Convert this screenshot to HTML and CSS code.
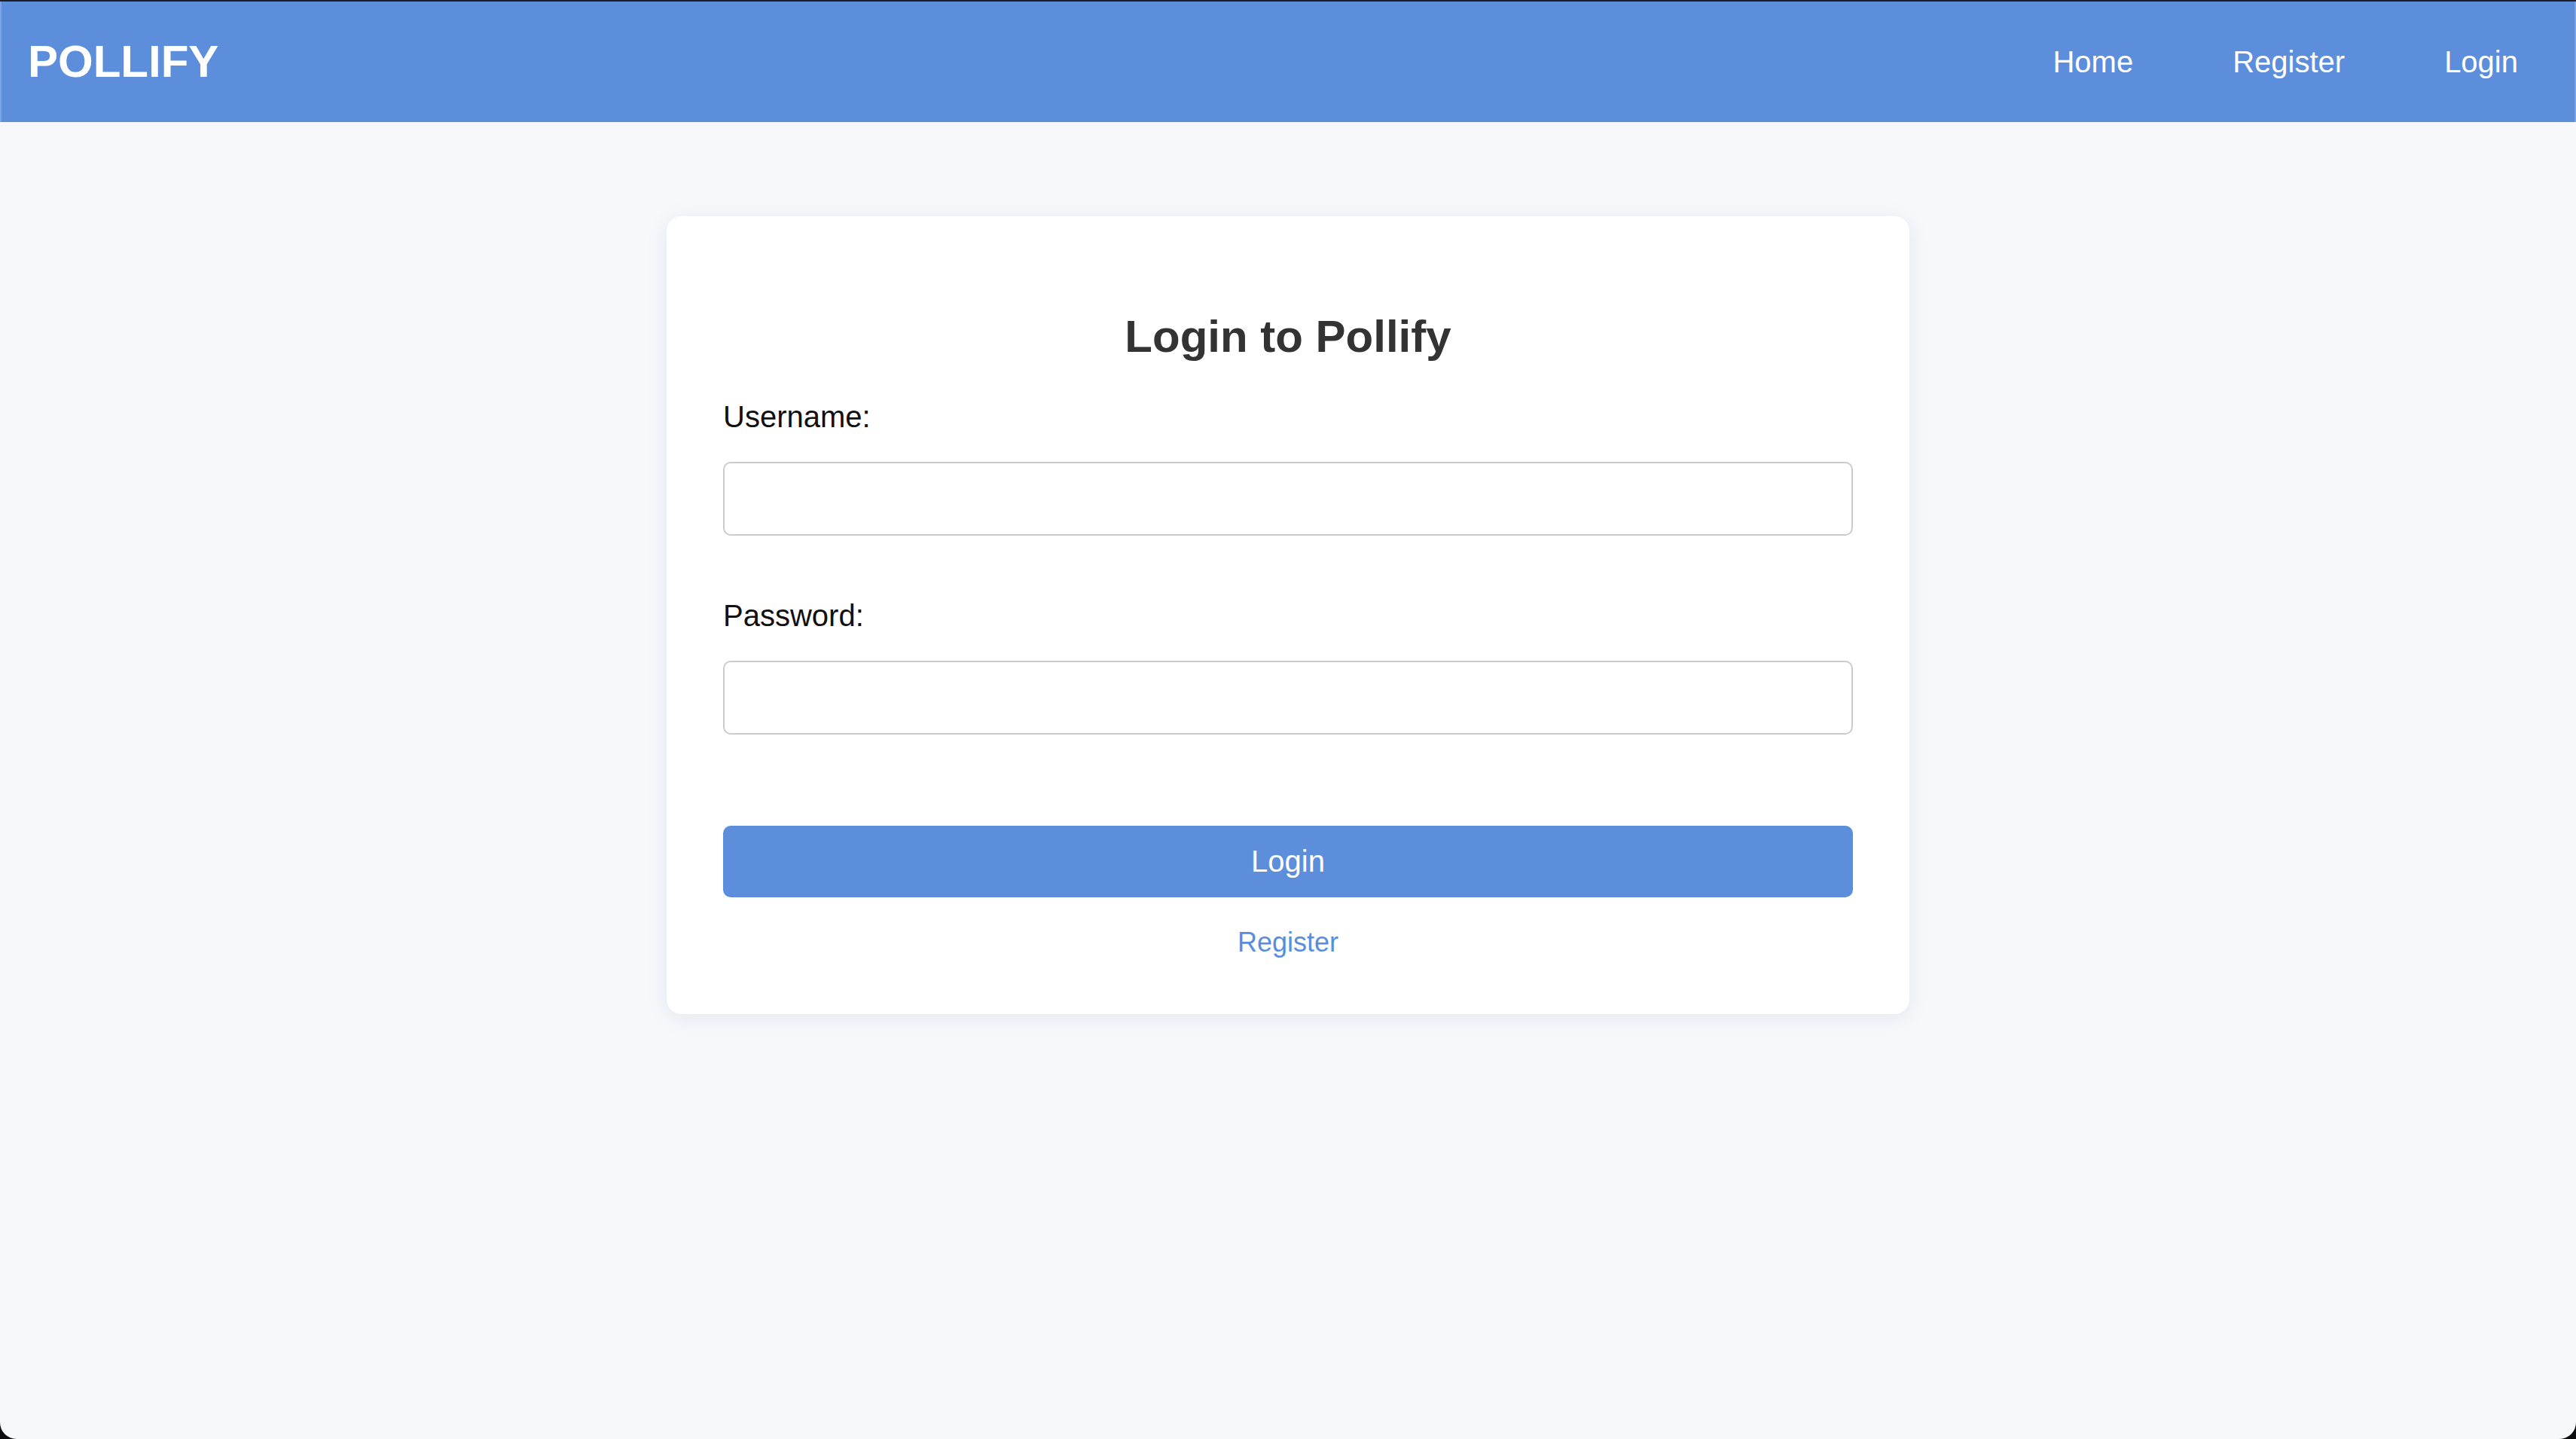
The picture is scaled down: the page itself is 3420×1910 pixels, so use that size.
FILE: index.html
```html
<!DOCTYPE html>
<html lang="en">
<head>
<meta charset="utf-8">
<title>Login - Pollify</title>
<link rel="stylesheet" href="styles.css">
</head>
<body>
<div class="window">
  <header class="topbar">
    <div class="logo">POLLIFY</div>
    <nav class="nav">
      <a href="#">Home</a>
      <a href="#">Register</a>
      <a href="#">Login</a>
    </nav>
  </header>
  <main class="main">
    <section class="card">
      <h2 class="title">Login to Pollify</h2>
      <form class="form">
        <div class="group">
          <label for="username">Username:</label>
          <input id="username" type="text">
        </div>
        <div class="group">
          <label for="password">Password:</label>
          <input id="password" type="password">
        </div>
        <button type="button" class="btn">Login</button>
      </form>
      <a class="alt-link" href="#">Register</a>
    </section>
  </main>
</div>
</body>
</html>
```
FILE: styles.css
```css
* { box-sizing: border-box; }
html { background: #0d0d10; }
body {
  margin: 0;
  height: 1910px;
  overflow: hidden;
  font-family: "Liberation Sans", Arial, sans-serif;
}
.window {
  height: 1910px;
  background: #f7f8fc;
  border-top: 2px solid #1e1e24;
  border-radius: 0 0 22px 22px;
  overflow: hidden;
  display: flex;
  flex-direction: column;
}
.topbar {
  height: 160px;
  flex: none;
  background: #5d8edb;
  display: flex;
  align-items: center;
  justify-content: space-between;
  padding: 0 75px 0 35px;
  border-left: 2px solid #7ca3e2;
  border-right: 2px solid #7ca3e2;
}
.logo {
  color: #fff;
  font-weight: bold;
  font-size: 60px;
  line-height: 68px;
}
.nav {
  display: flex;
  gap: 132px;
}
.nav a {
  color: #fff;
  text-decoration: none;
  font-size: 40px;
  line-height: 46px;
}
.main {
  flex: 1;
  display: flex;
  justify-content: center;
  align-items: flex-start;
  padding-top: 125px;
}
.card {
  width: 1650px;
  background: #fff;
  border-radius: 20px;
  padding: 75px;
  box-shadow: 0 5px 30px rgba(20, 30, 70, 0.08);
  display: flex;
  flex-direction: column;
}
.title {
  margin: 50px 0 49px;
  text-align: center;
  font-size: 60px;
  line-height: 69px;
  font-weight: bold;
  color: #333;
}
.form {
  display: flex;
  flex-direction: column;
}
.group {
  display: flex;
  flex-direction: column;
  margin-bottom: 83px;
}
.group:nth-child(2) { margin-bottom: 121px; }
.group label {
  font-size: 40px;
  line-height: 46px;
  color: #111;
  margin-bottom: 37px;
}
.group input {
  height: 98px;
  border: 2px solid #cbcbcb;
  border-radius: 10px;
  background: #fff;
  font-size: 40px;
  padding: 0 24px;
  font-family: inherit;
}
.btn {
  height: 95px;
  border: none;
  border-radius: 10px;
  background: #5d8edb;
  color: #fff;
  font-size: 40px;
  font-family: inherit;
  margin-bottom: 39px;
}
.alt-link {
  align-self: center;
  color: #5a8dde;
  text-decoration: none;
  font-size: 36px;
  line-height: 41px;
}
```
